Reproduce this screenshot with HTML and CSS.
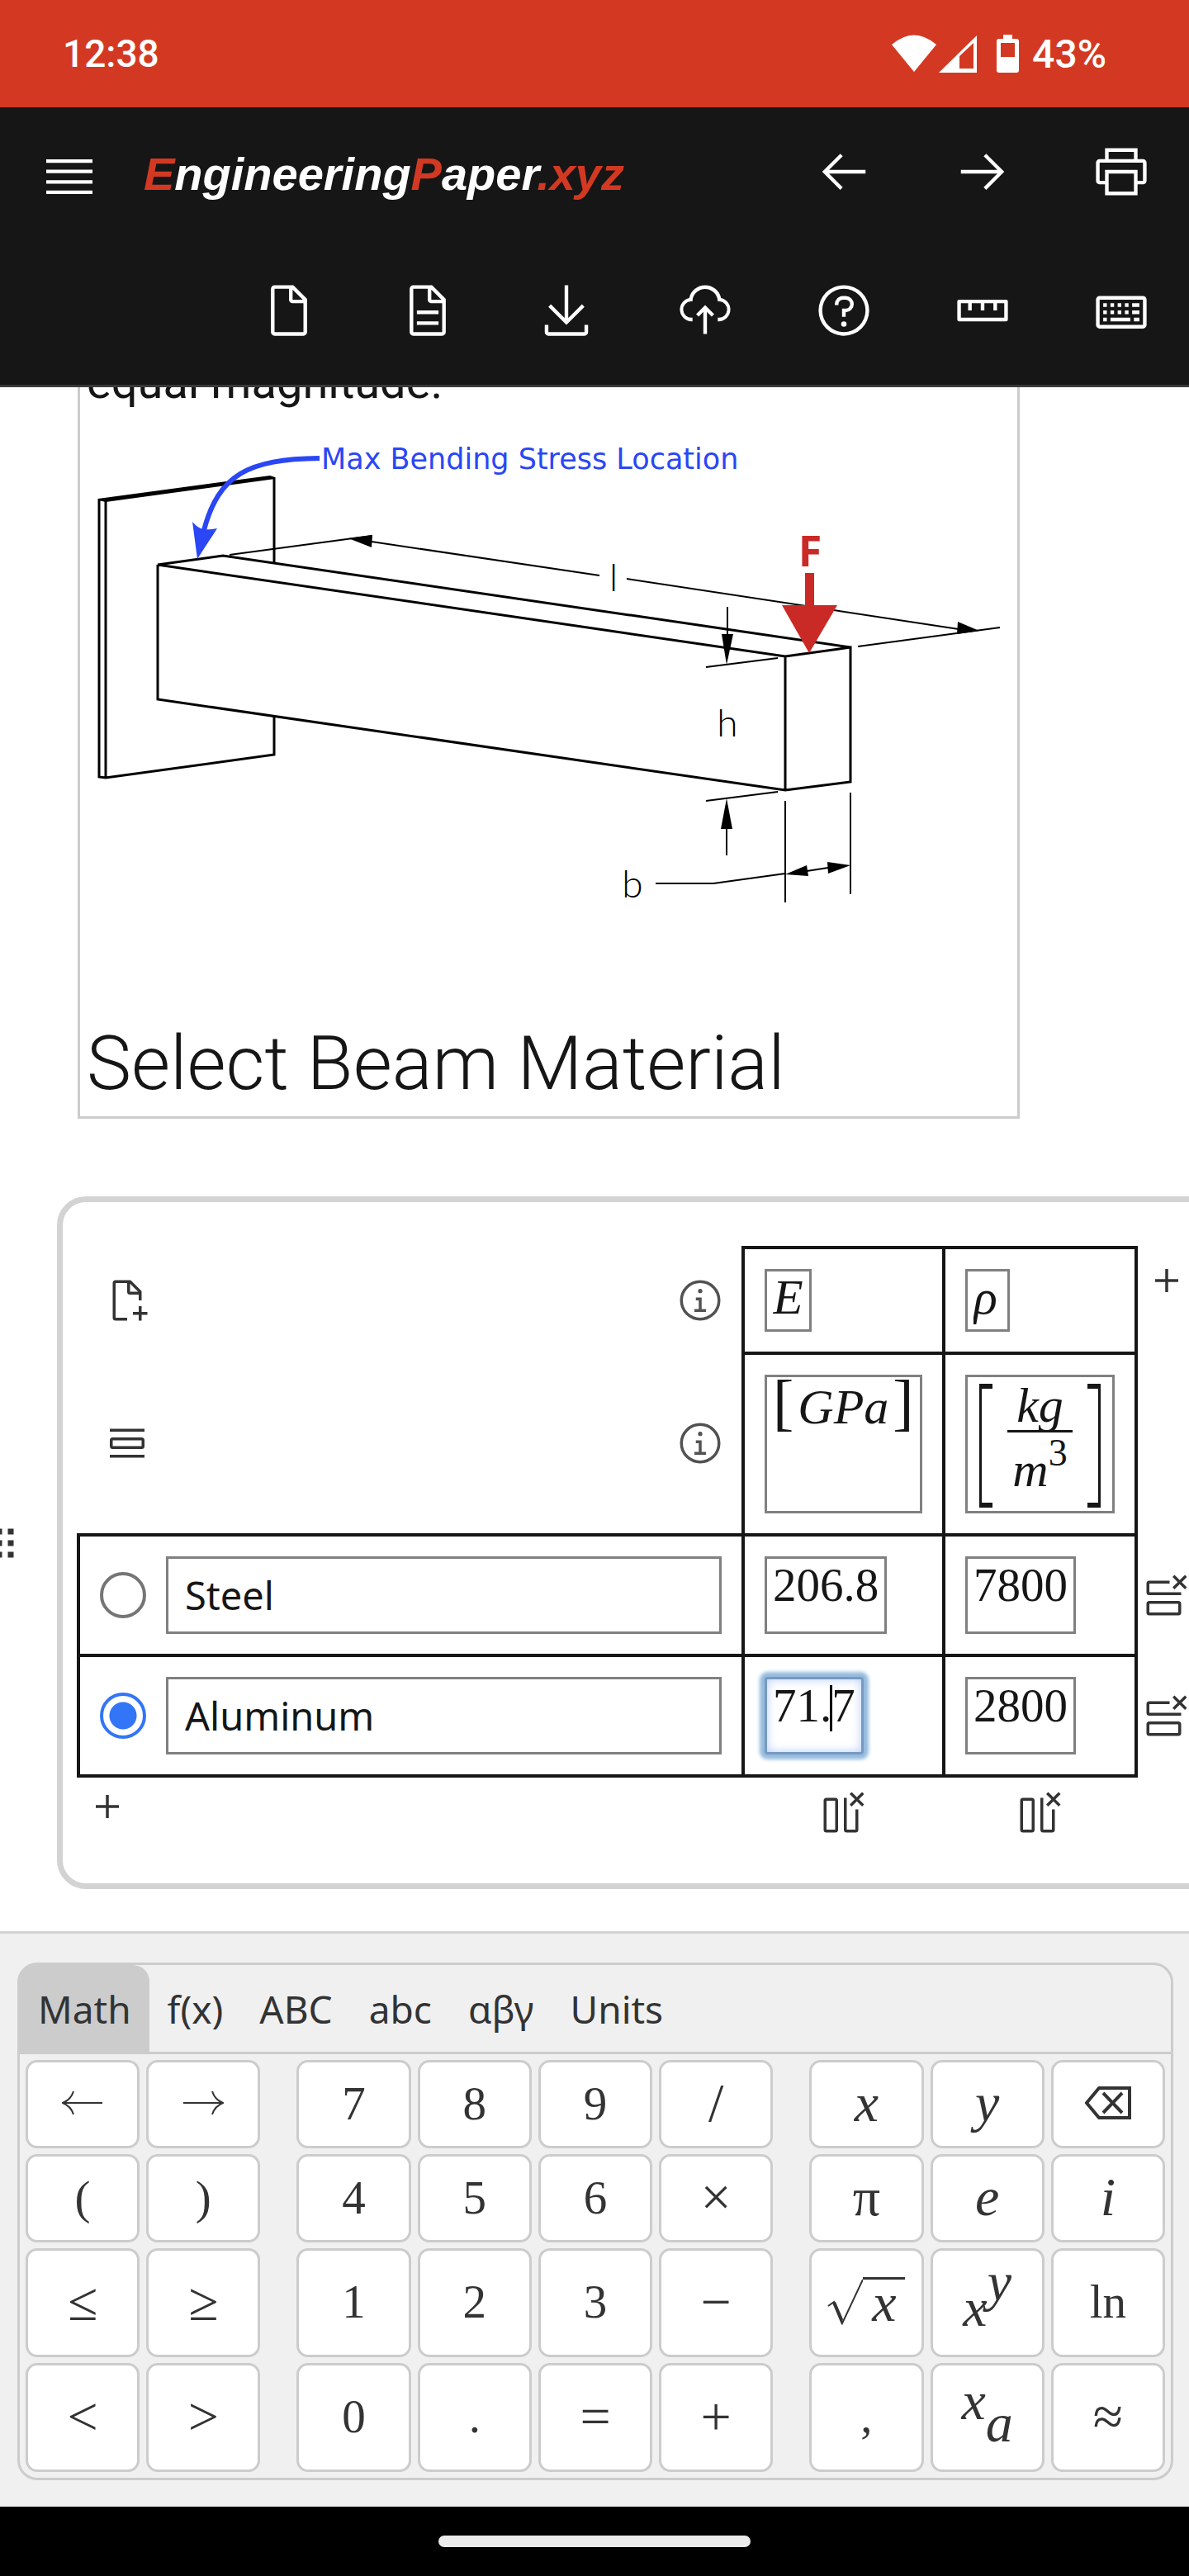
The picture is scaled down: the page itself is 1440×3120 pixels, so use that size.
FILE: index.html
```html
<!DOCTYPE html>
<html lang="en">
<head>
<meta charset="utf-8">
<meta name="viewport" content="width=device-width, initial-scale=1">
<title>EngineeringPaper.xyz</title>
<link rel="stylesheet" href="styles.css">
</head>
<body>
<svg class="sprite" aria-hidden="true">
  <symbol id="add" viewBox="0 0 32 32"><path d="M17 15V8h-2v7H8v2h7v7h2v-7h7v-2z"/></symbol>
  <symbol id="info" viewBox="0 0 32 32"><path d="M17 22v-8h-4v2h2v6h-3v2h8v-2zM16 8a1.5 1.5 0 1 0 1.5 1.5A1.5 1.5 0 0 0 16 8z"/><circle cx="16" cy="16" r="13" fill="none" stroke="currentColor" stroke-width="2"/></symbol>
  <symbol id="row-delete" viewBox="0 0 32 32"><path d="M30 3.4 28.6 2 25 5.6 21.4 2 20 3.4 23.6 7 20 10.6l1.4 1.4L25 8.4l3.6 3.6 1.4-1.4L26.4 7zM18 8V6H4a2 2 0 0 0-2 2v6a2 2 0 0 0 2 2h22v-2H4V8z"/><path fill-rule="evenodd" d="M4 20h20a2 2 0 0 1 2 2v6a2 2 0 0 1-2 2H4a2 2 0 0 1-2-2v-6a2 2 0 0 1 2-2zm0 2v6h20v-6z"/></symbol>
  <symbol id="column-delete" viewBox="0 0 32 32"><path d="M30 3.4 28.6 2 25 5.6 21.4 2 20 3.4 23.6 7 20 10.6l1.4 1.4L25 8.4l3.6 3.6 1.4-1.4L26.4 7zM24 14v14h-6V6h-2v22a2 2 0 0 0 2 2h6a2 2 0 0 0 2-2V14z"/><path fill-rule="evenodd" d="M4 6h6a2 2 0 0 1 2 2v20a2 2 0 0 1-2 2H4a2 2 0 0 1-2-2V8a2 2 0 0 1 2-2zm0 2v20h6V8z"/></symbol>
</svg>

<div class="status-bar">
  <span class="clock">12:38</span>
  <div class="status-icons">
    <svg width="54" height="46" viewBox="0 0 54 46"><path d="M0 12Q27-11 54 12L27 45z"/></svg>
    <svg class="signal" width="46" height="46" viewBox="0 0 46 46"><path fill-rule="evenodd" d="M46 1v45H0zM25 26v15h17V10z"/></svg>
    <svg class="battery" width="27" height="46" viewBox="0 0 27 46"><path fill-rule="evenodd" d="M8 0h11v5h5q3 0 3 3v35q0 3-3 3H3q-3 0-3-3V8q0-3 3-3h5zM5 10v17h17V10z"/></svg>
    <span>43%</span>
  </div>
</div>

<header class="app-header">
  <div class="header-row">
    <button class="menu-button" aria-label="Menu"><svg class="icon-lg" viewBox="0 0 20 20"><path d="M2 14.8h16V16H2zM2 11.2h16v1.2H2zM2 7.6h16v1.2H2zM2 4h16v1.2H2z"/></svg></button>
    <a class="logo" href="#"><em>E</em>ngineering<em>P</em>aper<em>.xyz</em></a>
    <nav class="actions">
      <button aria-label="Undo"><svg class="icon-lg" viewBox="0 0 32 32"><path d="m14 26 1.4-1.4L7.8 17H28v-2H7.8l7.6-7.6L14 6 4 16z"/></svg></button>
      <button aria-label="Redo"><svg class="icon-lg" viewBox="0 0 32 32"><path d="m18 6-1.4 1.4 7.6 7.6H4v2h20.2l-7.6 7.6L18 26l10-10z"/></svg></button>
      <button aria-label="Print"><svg class="icon-lg" viewBox="0 0 32 32"><path d="M28 9h-3V3H7v6H4a2 2 0 0 0-2 2v10a2 2 0 0 0 2 2h3v6h18v-6h3a2 2 0 0 0 2-2V11a2 2 0 0 0-2-2zM9 5h14v4H9zm14 22H9V17h14zm5-6h-3v-6H7v6H4V11h24z"/></svg></button>
    </nav>
  </div>
  <div class="header-row">
    <nav class="actions">
      <button aria-label="New sheet"><svg class="icon-lg" viewBox="0 0 32 32"><path d="m25.7 9.3-7-7A.9.9 0 0 0 18 2H8a2 2 0 0 0-2 2v24a2 2 0 0 0 2 2h16a2 2 0 0 0 2-2V10a.9.9 0 0 0-.3-.7zM18 4.4l5.6 5.6H18zM24 28H8V4h8v6a2 2 0 0 0 2 2h6z"/></svg></button>
      <button aria-label="Open sheet"><svg class="icon-lg" viewBox="0 0 32 32"><path d="m25.7 9.3-7-7A.9.9 0 0 0 18 2H8a2 2 0 0 0-2 2v24a2 2 0 0 0 2 2h16a2 2 0 0 0 2-2V10a.9.9 0 0 0-.3-.7zM18 4.4l5.6 5.6H18zM24 28H8V4h8v6a2 2 0 0 0 2 2h6z"/><path d="M10 22h12v2H10zM10 16h12v2H10z"/></svg></button>
      <button aria-label="Save to file"><svg class="icon-lg" viewBox="0 0 32 32"><path d="M26 24v4H6v-4H4v4a2 2 0 0 0 2 2h20a2 2 0 0 0 2-2v-4zM26 14l-1.4-1.4-7.6 7.6V2h-2v18.2l-7.6-7.6L6 14l10 10z"/></svg></button>
      <button aria-label="Share"><svg class="icon-lg" viewBox="0 0 32 32"><path d="m11 18 1.4 1.4 2.6-2.6V29h2V16.8l2.6 2.6L21 18l-5-5zM23.5 22H23v-2h.5a4.5 4.5 0 0 0 .36-9H23l-.1-.82a7 7 0 0 0-13.88 0L9 11h-.86a4.5 4.5 0 0 0 .36 9H9v2h-.5A6.5 6.5 0 0 1 7.2 9.14a9 9 0 0 1 17.6 0A6.5 6.5 0 0 1 23.5 22z"/></svg></button>
      <button aria-label="Help"><svg class="icon-lg" viewBox="0 0 32 32"><path d="M16 2a14 14 0 1 0 14 14A14 14 0 0 0 16 2zm0 26a12 12 0 1 1 12-12 12 12 0 0 1-12 12zM17 8h-1.5a4.5 4.5 0 0 0-4.5 4.5v.5h2v-.5a2.5 2.5 0 0 1 2.5-2.5H17a2.5 2.5 0 0 1 0 5h-2v4.5h2V17a4.5 4.5 0 0 0 0-9z"/><circle cx="16" cy="23.5" r="1.5"/></svg></button>
      <button aria-label="Default units"><svg class="icon-lg" viewBox="0 0 32 32"><path d="M29 10H3a1 1 0 0 0-1 1v10a1 1 0 0 0 1 1h26a1 1 0 0 0 1-1V11a1 1 0 0 0-1-1zm-1 10H4v-8h4v4h2v-4h5v4h2v-4h5v4h2v-4h4z"/></svg></button>
      <button aria-label="Keyboard"><svg class="icon-lg" viewBox="0 0 32 32"><path d="M28 26H4a2 2 0 0 1-2-2V10a2 2 0 0 1 2-2h24a2 2 0 0 1 2 2v14a2 2 0 0 1-2 2zM4 10v14h24V10z"/><path d="M6 12h2v2H6zM10 12h2v2h-2zM14 12h2v2h-2zM18 12h2v2h-2zM22 12h4v2h-4zM6 16h2v2H6zM10 16h2v2h-2zM14 16h2v2h-2zM18 16h2v2h-2zM22 16h4v2h-4zM6 20h2v2H6zM10 20h11v2H10zM23 20h3v2h-3z"/></svg></button>
    </nav>
  </div>
</header>

<main class="sheet">
  <section class="text-cell">
    <p>equal magnitude.</p>
    <svg class="diagram" viewBox="105 503 1119 729" role="img" aria-label="Cantilever beam">
      <g fill="none" stroke="#000" stroke-width="3">
        <path d="M120 604V941L128 942 332 914V867M332 682V578M128 606V942"/>
        <path d="M191 684V847L951 957 1030 947V784L951 795 191 684 270 673 1030 784M951 795V957"/>
      </g>
      <path d="M119 604 327 576 333 578V580L128 608 119 606z"/>
      <g fill="none" stroke="#000" stroke-width="2">
        <path d="M278 672 450 649M450 656 726 697M759 701 1161 762M1039 783 1211 760"/>
        <path d="M881 735V770M855 808 942 797M855 970 942 959M880 1000V1036"/>
        <path d="M951 970V1093M1030 960V1083M794 1070H864L951 1058M977 1055 1003 1051"/>
      </g>
      <path d="M422 652 451 648 450 663zM1186 764 1160 753 1159 768zM874 768H888L880 805zM873 1004H887L880 967zM951 1059 977 1048 979 1061zM1030 1048 1002 1044 1003 1058z"/>
      <path fill="none" stroke="#2a46f5" stroke-width="6" d="M387 555C300 556 265 575 247 642"/>
      <path fill="#2a46f5" d="M239 677 233 632Q240 640 246 641 253 642 263 640z"/>
      <path fill="#c92a26" d="M975 694H986V733H1014L980 791 947 733H975z"/>
      <text class="note" x="389" y="568">Max Bending Stress Location</text>
      <text class="force" x="981" y="686" text-anchor="middle">F</text>
      <g class="dimension" text-anchor="middle">
        <text x="743" y="716">l</text>
        <text x="881" y="892">h</text>
        <text x="766" y="1087">b</text>
      </g>
    </svg>
    <h1>Select Beam Material</h1>
  </section>

  <section class="cell-row">
    <svg class="icon drag-handle" viewBox="0 0 32 32"><path d="M10 6h4v4h-4zM18 6h4v4h-4zM10 14h4v4h-4zM18 14h4v4h-4zM10 22h4v4h-4zM18 22h4v4h-4z"/></svg>
    <div class="card">
      <table class="data-table">
        <colgroup><col class="col-label"><col class="col-a"><col class="col-b"><col class="col-tools"></colgroup>
        <tr>
          <td class="tools"><div class="label-tools">
            <button aria-label="Insert rows as documentation"><svg class="icon" viewBox="0 0 32 32"><path d="M30 24h-4v-4h-2v4h-4v2h4v4h2v-4h4zM16 28H8V4h8v6a2 2 0 0 0 2 2h6v4h2v-6a.9.9 0 0 0-.3-.7l-7-7A.9.9 0 0 0 18 2H8a2 2 0 0 0-2 2v24a2 2 0 0 0 2 2h8zm2-23.6 5.6 5.6H18z"/></svg></button>
            <svg class="icon info"><use href="#info"/></svg>
          </div></td>
          <th><input class="field symbol" aria-label="Column 1 name" value="E"></th>
          <th><input class="field symbol" aria-label="Column 2 name" value="ρ"></th>
          <td class="tools add-column"><button aria-label="Add column"><svg class="icon"><use href="#add"/></svg></button></td>
        </tr>
        <tr>
          <td class="tools"><div class="label-tools">
            <button aria-label="Hide unselected rows"><svg class="icon" viewBox="0 0 32 32"><path d="M4 6h24v2H4zM4 24h24v2H4z"/><rect x="5" y="13" width="22" height="6" rx="1" fill="none" stroke="currentColor" stroke-width="2"/></svg></button>
            <svg class="icon info"><use href="#info"/></svg>
          </div></td>
          <td><div class="field unit"><span class="bracket">[</span>GPa<span class="bracket">]</span></div></td>
          <td><div class="field unit stacked"><span class="fence open"></span><span class="fraction"><span class="numerator">kg</span><span class="denominator">m<sup>3</sup></span></span><span class="fence close"></span></div></td>
          <td class="tools"></td>
        </tr>
        <tr>
          <td><div class="label-row"><input type="radio" name="material" aria-label="Use Steel"><input type="text" class="label-input" aria-label="Row 1 label" value="Steel"></div></td>
          <td><input class="field number" aria-label="E of Steel" value="206.8"></td>
          <td><input class="field number" aria-label="ρ of Steel" value="7800"></td>
          <td class="tools"><button aria-label="Delete row"><svg class="icon"><use href="#row-delete"/></svg></button></td>
        </tr>
        <tr>
          <td><div class="label-row"><input type="radio" name="material" aria-label="Use Aluminum" checked><input type="text" class="label-input" aria-label="Row 2 label" value="Aluminum"></div></td>
          <td><div class="active-field"><input class="field number active" aria-label="E of Aluminum" value="71.7"><span class="caret"></span></div></td>
          <td><input class="field number" aria-label="ρ of Aluminum" value="2800"></td>
          <td class="tools"><button aria-label="Delete row"><svg class="icon"><use href="#row-delete"/></svg></button></td>
        </tr>
        <tr class="footer-row">
          <td class="tools add-row"><button aria-label="Add row"><svg class="icon"><use href="#add"/></svg></button></td>
          <td class="tools centered"><button aria-label="Delete column"><svg class="icon"><use href="#column-delete"/></svg></button></td>
          <td class="tools centered"><button aria-label="Delete column"><svg class="icon"><use href="#column-delete"/></svg></button></td>
          <td class="tools"></td>
        </tr>
      </table>
    </div>
  </section>
</main>

<section class="keyboard" aria-label="Math keyboard">
  <div class="panel">
    <div class="tabs" role="tablist">
      <button role="tab" class="selected" aria-selected="true">Math</button>
      <button role="tab">f(x)</button>
      <button role="tab">ABC</button>
      <button role="tab">abc</button>
      <button role="tab">αβγ</button>
      <button role="tab">Units</button>
    </div>
    <div class="keys">
      <button aria-label="Left"><svg class="arrow" viewBox="0 0 50 30"><path d="M49 15H2M14 1Q11 11 1 15 11 19 14 29"/></svg></button>
      <button aria-label="Right"><svg class="arrow" viewBox="0 0 50 30"><path d="M1 15H48M36 1Q39 11 49 15 39 19 36 29"/></svg></button>
      <i class="spacer"></i>
      <button>7</button><button>8</button><button>9</button><button class="op">/</button>
      <i class="spacer"></i>
      <button class="var">x</button><button class="var">y</button>
      <button aria-label="Backspace"><svg class="backspace" viewBox="0 0 56 40"><path d="M2 20 17 2H54V38H17zM22 8 45 32M45 8 22 32"/></svg></button>

      <button>(</button><button>)</button>
      <i class="spacer"></i>
      <button>4</button><button>5</button><button>6</button><button class="op">×</button>
      <i class="spacer"></i>
      <button class="const">π</button><button class="var">e</button><button class="var">i</button>

      <button class="op">≤</button><button class="op">≥</button>
      <i class="spacer"></i>
      <button>1</button><button>2</button><button>3</button><button class="op">−</button>
      <i class="spacer"></i>
      <button class="var root"><svg width="43" height="56" viewBox="0 0 43 56"><path d="M1 33 8 28 18 54 43 1" fill="none" stroke="currentColor" stroke-width="2"/><path d="M6 29 10 28 19 49 17 55z"/></svg><span>x</span></button>
      <button class="var raised"><span>x<sup>y</sup></span></button><button>ln</button>

      <button class="op">&lt;</button><button class="op">&gt;</button>
      <i class="spacer"></i>
      <button>0</button><button>.</button><button class="op">=</button><button class="op">+</button>
      <i class="spacer"></i>
      <button>,</button><button class="var lowered"><span>x<sub>a</sub></span></button><button class="op">≈</button>
    </div>
  </div>
</section>

<footer class="system-nav"><span class="home-indicator"></span></footer>
</body>
</html>
```
FILE: styles.css
```css
* { box-sizing: border-box; }

body {
  margin: 0;
  min-height: 100vh;
  display: flex;
  flex-direction: column;
  overflow-x: hidden;
  background: #fff;
  color: #161616;
  font-family: "Noto Sans", "Open Sans", sans-serif;
}

button {
  display: flex;
  align-items: center;
  justify-content: center;
  margin: 0;
  padding: 0;
  border: 0;
  background: none;
  color: inherit;
  font: inherit;
}

svg { display: block; fill: currentColor; }
.sprite { position: absolute; width: 0; height: 0; }
.icon { width: 56px; height: 56px; color: #333; }
.icon-lg { width: 70px; height: 70px; }
.info { color: #525252; }

/* Status bar */
.status-bar {
  height: 130px;
  padding: 0 100px 0 76px;
  display: flex;
  align-items: center;
  justify-content: space-between;
  background: #d33922;
  color: #fff;
  font: 500 48px Roboto, sans-serif;
}
.clock { font-size: 46px; }
.status-icons { display: flex; align-items: center; }
.signal { margin-left: 3px; }
.battery { margin: 0 16px 0 24px; }

/* Header */
.app-header { background: #161616; color: #fff; border-bottom: 3px solid #393939; }
.header-row { height: 168px; display: flex; align-items: stretch; }
.menu-button { width: 168px; }
.logo {
  align-self: center;
  padding-left: 6px;
  padding-bottom: 8px;
  color: #fff;
  text-decoration: none;
  font: italic bold 56px "Liberation Sans", Arial, sans-serif;
}
.logo em { color: #d33922; }
.actions { display: flex; margin: 0 -2px 0 auto; }
.actions button { width: 168px; padding-bottom: 12px; }

/* Sheet */
.sheet { flex: 1; overflow: hidden; }
.text-cell {
  margin: -46px 205px 94px 94px;
  padding: 0 8px 8px;
  border: 3px solid #ccc;
  border-top: 0;
  font-family: Roboto, sans-serif;
}
.text-cell p { margin: 0; font-size: 56px; line-height: 80px; }
.text-cell h1 { margin: 0; font-size: 91px; line-height: 112px; font-weight: 300; }
.diagram { width: 100%; height: auto; fill: #000; }
.note { font: 35px "DejaVu Sans", sans-serif; fill: #2a46f5; }
.force { font: bold 52px "Open Sans", sans-serif; fill: #c92a26; }
.dimension { font: 300 46px Lato, sans-serif; }

.cell-row { display: flex; align-items: center; gap: 35px; margin-bottom: 50px; }
.drag-handle { flex: none; margin-left: -22px; }
.card {
  flex: none;
  padding: 53px 24px 44px 17px;
  border: 7px solid #d3d3d3;
  border-radius: 35px;
}

/* Data table */
.data-table { width: 1351px; border-collapse: collapse; table-layout: fixed; }
.col-label { width: 805px; }
.col-a { width: 243px; }
.col-b { width: 233px; }
.col-tools { width: 70px; }
.data-table td, .data-table th {
  padding: 24px;
  border: 4px solid #161616;
  text-align: left;
  vertical-align: top;
  font-weight: 400;
}
.data-table .tools { padding: 0; border: 0; vertical-align: middle; }
.data-table .add-column { padding-top: 5px; vertical-align: top; }
.data-table .add-row { vertical-align: top; }
.tools button { width: 70px; height: 70px; }
.centered button { margin: 0 auto; }
.footer-row { height: 86px; }
.label-tools { display: flex; align-items: center; justify-content: space-between; padding: 0 22px 0 24px; }
.label-row { display: flex; align-items: center; gap: 24px; }
.label-row input[type="radio"] {
  appearance: none;
  flex: none;
  width: 56px;
  height: 56px;
  margin: 0;
  border: 4px solid #757575;
  border-radius: 50%;
}
.label-row input[type="radio"]:checked {
  border-color: #3275f6;
  background: radial-gradient(circle, #3275f6 0 16px, #fff 17px);
}
.label-input {
  flex: 1;
  min-width: 0;
  height: 94px;
  padding: 0 20px;
  border: 3px solid #808080;
  border-radius: 0;
  color: #161616;
  font: 47px "Noto Sans", "Open Sans", sans-serif;
}

/* Math fields */
.field {
  display: block;
  field-sizing: content;
  width: max-content;
  height: 76px;
  padding: 0 7px 7px;
  border: 3px solid #808080;
  border-radius: 0;
  outline: 0;
  background: #fff;
  color: #161616;
  font: 57px/63px "Liberation Serif", "Times New Roman", serif;
}
.symbol { min-width: 54px; font-style: italic; font-size: 60px; }
.number { height: 94px; padding-bottom: 25px; }
.unit { height: 168px; padding-bottom: 0; font-style: italic; font-size: 60px; line-height: 72px; }
.bracket { font-style: normal; font-size: 76px; line-height: 0; margin-right: 5px; }
.bracket + .bracket { margin: 0 0 0 5px; }
.stacked { display: flex; padding: 8px 14px 4px; }
.fence { width: 16px; border: solid #161616; border-width: 6px 0 6px 3px; }
.fence.close { border-width: 6px 3px 6px 0; }
.fraction { display: flex; flex-direction: column; width: 79px; margin: 0 18px; text-align: center; }
.numerator { line-height: 52px; padding-bottom: 4px; border-bottom: 3px solid #161616; }
.denominator { line-height: 90px; white-space: nowrap; }
.denominator sup { font-size: 46px; line-height: 0; font-style: normal; vertical-align: 25px; }
.active-field { position: relative; width: max-content; }
.field.active {
  border-color: #7799c2;
  border-radius: 4px;
  box-shadow: 0 0 4px 6px #94bbdd, inset 0 0 12px #b5ccf8;
}
.caret { position: absolute; left: 79px; top: 10px; width: 3px; height: 56px; background: #000; }

/* Virtual keyboard */
.keyboard { padding: 35px 19px 32px 21px; border-top: 3px solid #d3d3d3; background: #f0f0f0; color: #333; }
.panel { border: 3px solid #ccc; border-radius: 24px; }
.tabs { display: flex; border-bottom: 3px solid #ccc; }
.tabs button { height: 105px; padding: 0 22px; font-size: 46px; border-radius: 20px 20px 0 0; }
.tabs .selected { background: #ccc; }
.keys {
  display: grid;
  grid-template-columns: repeat(2, minmax(0, 1fr)) 28px repeat(4, minmax(0, 1fr)) 28px repeat(3, minmax(0, 1fr));
  grid-template-rows: 107px 107px 132px 132px;
  gap: 7px 8px;
  padding: 7px;
}
.keys button {
  padding-bottom: 3px;
  border: 3px solid #ccc;
  border-radius: 14px;
  background: #fff;
  font: 57px "Liberation Serif", "Times New Roman", serif;
}
.keys .var { font-style: italic; font-size: 66px; }
.keys .const, .keys .op { font-size: 66px; }
.keys sup { line-height: 0; font-size: 66px; vertical-align: 31px; }
.keys sub { line-height: 0; font-size: 66px; vertical-align: -27px; }
.keys .raised { padding-top: 14px; }
.keys .lowered { padding-bottom: 40px; }
.root span { width: 51px; line-height: 56px; border-top: 3px solid #333; }
.arrow { width: 50px; height: 30px; fill: none; stroke: #333; stroke-width: 2; }
.backspace { width: 56px; height: 40px; fill: none; stroke: #333; stroke-width: 4; }

/* System navigation */
.system-nav { height: 84px; display: flex; align-items: center; justify-content: center; background: #000; }
.home-indicator { width: 378px; height: 14px; border-radius: 7px; background: #ebebeb; }
```
